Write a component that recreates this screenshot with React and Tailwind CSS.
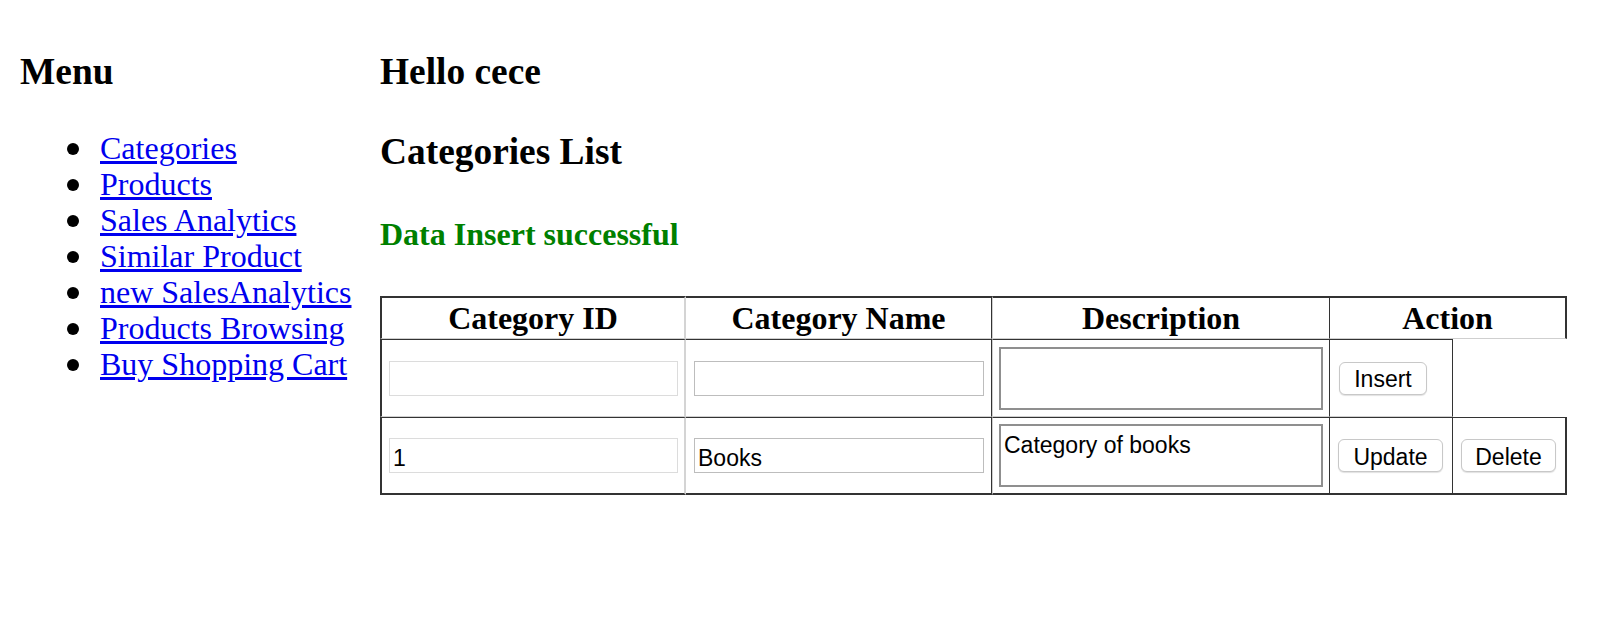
export default function App() {
  const links = [
    'Categories',
    'Products',
    'Sales Analytics',
    'Similar Product',
    'new SalesAnalytics',
    'Products Browsing',
    'Buy Shopping Cart',
  ];
  const sans = "font-['Liberation_Sans',Arial,sans-serif]";
  return (
    <div className="flex w-[1608px] min-h-[618px] bg-white text-black font-['Liberation_Serif','Times_New_Roman',serif]">
      <div className="w-[380px] shrink-0 pl-[20px] pt-[50px]">
        <h3 className="text-[37.4px] leading-[43px] font-bold">Menu</h3>
        <ul className="mt-[37px] pl-[47px] text-[32px] leading-[36px]">
          {links.map((l) => (
            <li key={l} className="flex items-start">
              <span className="mt-[13px] mr-[21px] h-[12px] w-[12px] shrink-0 rounded-full bg-black"></span>
              <a href="#" className="text-[#0000ee] underline">
                {l}
              </a>
            </li>
          ))}
        </ul>
      </div>
      <div className="pt-[50px]">
        <h3 className="text-[37.4px] leading-[43px] font-bold">Hello cece</h3>
        <h3 className="mt-[37px] text-[37.4px] leading-[43px] font-bold">Categories List</h3>
        <h4 className="mt-[43px] text-[32px] leading-[37px] font-bold text-[#008000]">
          Data Insert successful
        </h4>
        <div className="mt-[43px] grid w-[1187px] grid-cols-[306px_306px_338px_123px_114px] grid-rows-[43px_78px_78px] text-[32px] leading-[37px] font-bold">
          {/* header */}
          <div className="flex items-center justify-center border-t-2 border-l-2 border-r-2 border-b border-t-[#333] border-l-[#333] border-r-[#d4d4d4] border-b-[#cfcfcf]">
            Category ID
          </div>
          <div className="flex items-center justify-center border-t-2 border-r border-b border-t-[#333] border-r-[#333] border-b-[#cfcfcf]">
            Category Name
          </div>
          <div className="flex items-center justify-center border-t-2 border-l border-r border-b border-t-[#333] border-l-[#cfcfcf] border-r-[#333] border-b-[#cfcfcf]">
            Description
          </div>
          <div className="col-span-2 flex items-center justify-center border-t-2 border-r-2 border-b border-t-[#333] border-r-[#333] border-b-[#cfcfcf]">
            Action
          </div>

          {/* row 1 */}
          <div className={`flex items-center border-t border-l-2 border-r-2 border-b border-t-[#333] border-l-[#333] border-r-[#d4d4d4] border-b-[#d0d0d0] font-normal ${sans}`}>
            <input
              defaultValue=""
              className="ml-[7px] h-[35px] w-[289px] border border-[#dcdcdc] bg-white px-[3px] pt-[5px] pb-0 text-[23px] leading-[26px] outline-none"
            />
          </div>
          <div className={`flex items-center border-t border-r border-b border-t-[#333] border-r-[#333] border-b-[#d0d0d0] font-normal ${sans}`}>
            <input
              defaultValue=""
              className="ml-[8px] h-[35px] w-[290px] border border-[#bdbdbd] bg-white px-[3px] pt-[5px] pb-0 text-[23px] leading-[26px] outline-none"
            />
          </div>
          <div className={`flex items-center border-t border-l border-r border-b border-t-[#333] border-l-[#cfcfcf] border-r-[#333] border-b-[#d0d0d0] font-normal ${sans}`}>
            <textarea
              defaultValue=""
              className="ml-[6px] h-[63px] w-[324px] resize-none border-2 border-[#8f8f8f] bg-white px-[3px] pt-[6px] text-[23px] leading-[26px] outline-none"
            />
          </div>
          <div className={`flex items-center border-t border-r border-b border-t-[#333] border-r-[#333] border-b-[#d0d0d0] font-normal ${sans}`}>
            <button className="ml-[9px] h-[33px] w-[88px] rounded-[6px] border border-[#c8c8c8] bg-white pt-[2px] text-[23px] leading-[26px] shadow-[0_1px_1px_rgba(0,0,0,0.12)]">
              Insert
            </button>
          </div>
          <div></div>

          {/* row 2 */}
          <div className={`flex items-center border-t border-l-2 border-r-2 border-b-2 border-t-[#333] border-l-[#333] border-r-[#d4d4d4] border-b-[#333] font-normal ${sans}`}>
            <input
              defaultValue="1"
              className="ml-[7px] h-[35px] w-[289px] border border-[#dcdcdc] bg-white px-[3px] pt-[5px] pb-0 text-[23px] leading-[26px] outline-none"
            />
          </div>
          <div className={`flex items-center border-t border-r border-b-2 border-t-[#333] border-r-[#333] border-b-[#333] font-normal ${sans}`}>
            <input
              defaultValue="Books"
              className="ml-[8px] h-[35px] w-[290px] border border-[#bdbdbd] bg-white px-[3px] pt-[5px] pb-0 text-[23px] leading-[26px] outline-none"
            />
          </div>
          <div className={`flex items-center border-t border-l border-r border-b-2 border-t-[#333] border-l-[#cfcfcf] border-r-[#333] border-b-[#333] font-normal ${sans}`}>
            <textarea
              defaultValue="Category of books"
              className="ml-[6px] h-[63px] w-[324px] resize-none border-2 border-[#8f8f8f] bg-white px-[3px] pt-[6px] text-[23px] leading-[26px] outline-none"
            />
          </div>
          <div className={`flex items-center border-t border-r border-b-2 border-t-[#333] border-r-[#333] border-b-[#333] font-normal ${sans}`}>
            <button className="ml-[8px] h-[33px] w-[105px] rounded-[6px] border border-[#c8c8c8] bg-white pt-[2px] text-[23px] leading-[26px] shadow-[0_1px_1px_rgba(0,0,0,0.12)]">
              Update
            </button>
          </div>
          <div className={`flex items-center border-t border-r-2 border-b-2 border-t-[#333] border-r-[#333] border-b-[#333] font-normal ${sans}`}>
            <button className="ml-[8px] h-[33px] w-[95px] rounded-[6px] border border-[#c8c8c8] bg-white pt-[2px] text-[23px] leading-[26px] shadow-[0_1px_1px_rgba(0,0,0,0.12)]">
              Delete
            </button>
          </div>
        </div>
      </div>
    </div>
  );
}
